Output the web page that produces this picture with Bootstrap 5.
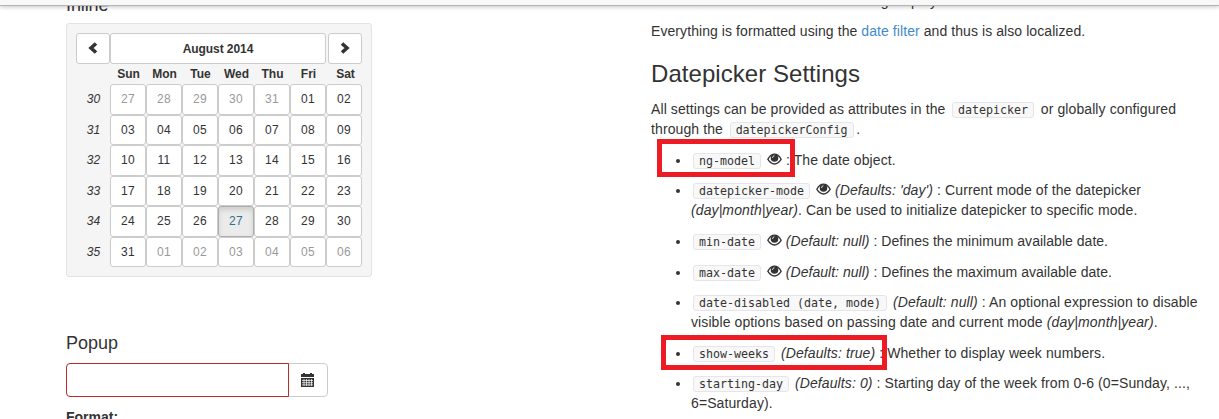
<!DOCTYPE html>
<html lang="en">
<head>
<meta charset="utf-8">
<meta name="viewport" content="width=device-width, initial-scale=1">
<title>Datepicker</title>
<link href="https://cdn.jsdelivr.net/npm/bootstrap@5.3.0/dist/css/bootstrap.min.css" rel="stylesheet">
<style>
body{font-family:"Liberation Sans",Arial,sans-serif;font-size:14px;line-height:20px;color:#333;height:419px;overflow:hidden}
.topbar{height:6px;min-height:0;background:#f8f8f8;border-bottom:1px solid #b4b4b4;box-shadow:0 1px 4px rgba(0,0,0,.22)}
.page{width:1170px;margin-left:51px;height:419px}
.page>div{width:585px;padding:0 15px;flex:none}
h3,h4{font-weight:400;color:#333}
h4{font-size:18px;line-height:20px}
h3{font-size:24px;line-height:26px;margin:20px 0 10px}
.first-h{margin:-5px 0 8px;letter-spacing:-.1px}
.picker{width:306px;height:254px;padding:9px;background:#f5f5f5;border:1px solid #e3e3e3;border-radius:3px}
.cal{display:grid;grid-template-columns:34px repeat(7,36px);grid-template-rows:31px 20px repeat(6,30.5px);font-size:12px;text-align:center}
.cal .btn,.cal-btn{--bs-btn-bg:#fff;--bs-btn-border-color:#ccc;--bs-btn-color:#333;--bs-btn-font-size:12px;--bs-btn-border-radius:3px;--bs-btn-padding-x:0;--bs-btn-padding-y:0;line-height:18px;letter-spacing:.3px}
.cal .other{--bs-btn-color:#999}
.cal .title{grid-column:2/8;letter-spacing:-.08px}
.cal .next{margin-left:2px}
.cal .today{--bs-btn-bg:#ebebeb;--bs-btn-color:#31708f;--bs-btn-border-color:#adadad;box-shadow:inset 0 3px 5px rgba(0,0,0,.125)}
.cal strong,.cal em{line-height:21px;letter-spacing:0;padding-left:1px}
.cal .sat{padding-left:3px}
.cal em{line-height:30px}
.pop{margin:56px 0 10px}
.pop-in{width:262px;height:34px}
.pop-in .form-control{border:1px solid #b92c28;border-radius:4px 0 0 4px;padding:0 12px;position:relative;z-index:6}
.pop-in .btn{width:40px;--bs-btn-border-radius:4px;padding:0 2px 2px 0}
.format{margin-top:10px}
.settings{letter-spacing:.1px}
.cut{margin:-9px 0 10px;padding-left:203px}
p{margin:0 0 10px}
a{color:#428bca;text-decoration:none}
.lead-in{letter-spacing:.075px}
.settings h3{letter-spacing:.05px}
.intro{margin-top:12px}
code{font:11.63px/16px "DejaVu Sans Mono",monospace;letter-spacing:0;color:#333;background:#f8f8f8;border:1px solid #e6e6ea;border-radius:3px;padding:0 5px;margin:0 2px;white-space:nowrap}
.intro code{margin:0 2.700px}
.opts{padding-left:40px;margin:10.6px 0 0}
.opts li{margin-bottom:10.65px}
.tight{letter-spacing:.03px}
.eye{width:15px;height:12px;vertical-align:0;margin:0}
.mark-box{border:5px solid #ed1c24}
.mk1{left:657px;top:139px;width:138px;height:38px}
.mk2{left:661px;top:335px;width:226px;height:35px}
</style>
<script src="https://cdn.jsdelivr.net/npm/bootstrap@5.3.0/dist/js/bootstrap.bundle.min.js"></script>
</head>
<body>
<svg class="d-none"><symbol id="eye" viewBox="0 0 15 12"><path fill="none" stroke="#333" stroke-width="1.300" d="M.8 6.200C2.600 3 4.800 1.100 7.500 1.100S12.400 3 14.200 6.200C12.400 9.300 10.200 11 7.500 11S2.600 9.300 .8 6.200Z"/><circle cx="7.500" cy="5" r="3.800" fill="#333"/><path d="M5.600 4.800C5.700 3.600 6.300 3 7.300 2.800" stroke="#fff" stroke-width="1" fill="none"/></symbol></svg>
<nav class="navbar fixed-top p-0 topbar"></nav>
<main class="page d-flex">
<div>
<h4 class="first-h">Inline</h4>
<div class="picker"><div class="cal" id="cal">
<button class="btn" aria-label="Previous month"><svg width="10" height="14" viewBox="0 0 10 14"><path d="M8 1.500 3 6l5 4.500" fill="none" stroke="#333" stroke-width="3.600"/></svg></button>
<button class="btn title fw-bold">August 2014</button>
<button class="btn next" aria-label="Next month"><svg width="10" height="14" viewBox="0 0 10 14"><path d="M2 1.500 7 6l-5 4.500" fill="none" stroke="#333" stroke-width="3.600"/></svg></button>
<span></span><strong>Sun</strong><strong>Mon</strong><strong>Tue</strong><strong>Wed</strong><strong>Thu</strong><strong>Fri</strong><strong class="sat">Sat</strong>
</div></div>
<h4 class="pop">Popup</h4>
<div class="input-group pop-in"><input class="form-control" type="text" aria-label="Date"><button class="btn cal-btn" aria-label="Open calendar"><svg width="13" height="14" viewBox="0 0 13 14"><path fill="#333" d="M0 1h2V0h2v1h5V0h2v1h2v3H0ZM0 5h13v9H0Z"/><path stroke="#fff" stroke-width=".7" d="M1 7.500h11M1 9.700h11M1 11.900h11M3 6v7M5.500 6v7M8 6v7M10.500 6v7"/></svg></button></div>
<div class="fw-bold format">Format:</div>
</div>
<div class="settings">
<p class="cut">being displayed</p>
<p class="lead-in">Everything is formatted using the <a href="#">date filter</a> and thus is also localized.</p>
<h3>Datepicker Settings</h3>
<p class="intro">All settings can be provided as attributes in the <code>datepicker</code> or globally configured<br>through the <code>datepickerConfig</code>.</p>
<ul class="opts">
<li><code>ng-model</code> <svg class="eye"><use href="#eye"/></svg> : The date object.</li>
<li><code>datepicker-mode</code> <svg class="eye"><use href="#eye"/></svg> <em>(Defaults: 'day')</em> : Current mode of the datepicker<br><em>(day|month|year)</em>. Can be used to initialize datepicker to specific mode.</li>
<li class="tight"><code>min-date</code> <svg class="eye"><use href="#eye"/></svg> <em>(Default: null)</em> : Defines the minimum available date.</li>
<li class="tight"><code>max-date</code> <svg class="eye"><use href="#eye"/></svg> <em>(Default: null)</em> : Defines the maximum available date.</li>
<li><code>date-disabled (date, mode)</code> <em>(Default: null)</em> : An optional expression to disable<br>visible options based on passing date and current mode <em>(day|month|year)</em>.</li>
<li><code>show-weeks</code> <em>(Defaults: true)</em> : Whether to display week numbers.</li>
<li><code>starting-day</code> <em>(Defaults: 0)</em> : Starting day of the week from 0-6 (0=Sunday, ...,<br>6=Saturday).</li>
</ul>
</div>
</main>
<div class="mark-box mk1 position-absolute"></div>
<div class="mark-box mk2 position-absolute"></div>
<script>
const cal=document.getElementById('cal');
for(let w=0;w<6;w++){
  let h='<em>'+(30+w)+'</em>';
  for(let d=0;d<7;d++){
    const date=new Date(2014,6,27+w*7+d),n=date.getDate(),aug=date.getMonth()===7;
    h+='<button class="btn'+(aug?'':' other')+(aug&&n===27?' today':'')+'">'+String(n).padStart(2,'0')+'</button>';
  }
  cal.insertAdjacentHTML('beforeend',h);
}
</script>
</body>
</html>
